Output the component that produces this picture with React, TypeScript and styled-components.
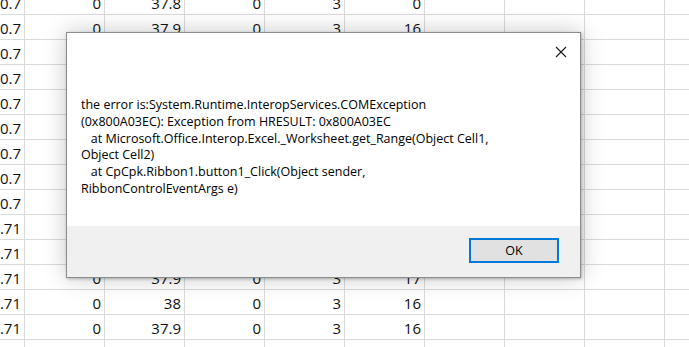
import * as React from 'react'
import styled, { createGlobalStyle } from 'styled-components'

const GlobalStyle = createGlobalStyle`
    html, body {
        margin: 0;
        padding: 0;
        background: #ffffff;
        overflow: hidden;
    }
`

// rows 2..10 sit under the dialog, only column A shows
const rows: Array<Array<string>> = [
    ['0.7', '0', '37.8', '0', '3', '0'],
    ['0.7', '0', '37.9', '0', '3', '16'],
    ['0.7'],
    ['0.7'],
    ['0.7'],
    ['0.7'],
    ['0.7'],
    ['0.7'],
    ['0.7'],
    ['0.71'],
    ['0.71'],
    ['0.71', '0', '37.9', '0', '3', '17'],
    ['0.71', '0', '38', '0', '3', '16'],
    ['0.71', '0', '37.9', '0', '3', '16'],
    [],
]

const COLS = 10

const message = `the error is:System.Runtime.InteropServices.COMException
(0x800A03EC): Exception from HRESULT: 0x800A03EC
   at Microsoft.Office.Interop.Excel._Worksheet.get_Range(Object Cell1,
Object Cell2)
   at CpCpk.Ribbon1.button1_Click(Object sender,
RibbonControlEventArgs e)`

export default function App() {
    return (
        <Page>
            <GlobalStyle />
            <Sheet>
                {rows.map((row, r) =>
                    Array.from({ length: COLS }).map((_, c) => (
                        <Cell key={`${r}-${c}`}>{row[c] || ''}</Cell>
                    ))
                )}
            </Sheet>
            <Dialog>
                <TitleBar>
                    <CloseButton aria-label="Close">
                        <svg width="12" height="12" viewBox="0 0 12 12">
                            <path d="M1 1 L11 11 M11 1 L1 11" stroke="#1a1a1a" strokeWidth="1.1" fill="none" />
                        </svg>
                    </CloseButton>
                </TitleBar>
                <Message>{message}</Message>
                <Footer>
                    <Button>OK</Button>
                </Footer>
            </Dialog>
        </Page>
    )
}

const Page = styled.div`
    position: relative;
    width: 689px;
    height: 347px;
    overflow: hidden;
    background: #ffffff;
`

const Sheet = styled.div`
    display: grid;
    grid-template-columns: 25px repeat(9, 80px);
    grid-auto-rows: 25px;
    margin-top: -10px;
    font-family: "Open Sans", "Liberation Sans", sans-serif;
    font-size: 15px;
    color: #111111;
`

const Cell = styled.div`
    display: flex;
    justify-content: flex-end;
    align-items: flex-end;
    overflow: hidden;
    white-space: nowrap;
    box-sizing: border-box;
    padding: 0 3px 2px 0;
    line-height: 18px;
    border-right: 1px solid #dadada;
    border-bottom: 1px solid #dadada;
`

const Dialog = styled.div`
    position: absolute;
    left: 66px;
    top: 32px;
    width: 515px;
    height: 246px;
    box-sizing: border-box;
    display: flex;
    flex-direction: column;
    background: #ffffff;
    border: 1px solid #8c8c8c;
    box-shadow: 0 0 22px rgba(0, 0, 0, 0.22), 1px 1px 3px rgba(0, 0, 0, 0.25);
    font-family: "Open Sans", "Noto Sans", sans-serif;
    font-size: 12.5px;
    color: #000000;
`

const TitleBar = styled.div`
    display: flex;
    justify-content: flex-end;
    align-items: center;
    height: 38px;
    padding-right: 4px;
`

const CloseButton = styled.div`
    display: flex;
    align-items: center;
    justify-content: center;
    width: 30px;
    height: 30px;
`

const Message = styled.div`
    flex: 1;
    padding: 26px 14px 0 14px;
    white-space: pre-wrap;
    line-height: 16.8px;
`

const Footer = styled.div`
    display: flex;
    justify-content: flex-end;
    align-items: flex-start;
    height: 51px;
    box-sizing: border-box;
    padding: 12px 21px 0 0;
    background: #f0f0f0;
`

const Button = styled.div`
    display: flex;
    align-items: center;
    justify-content: center;
    width: 90px;
    height: 25px;
    box-sizing: border-box;
    background: #e1e1e1;
    border: 2px solid #0078d7;
    font-size: 12.5px;
`
